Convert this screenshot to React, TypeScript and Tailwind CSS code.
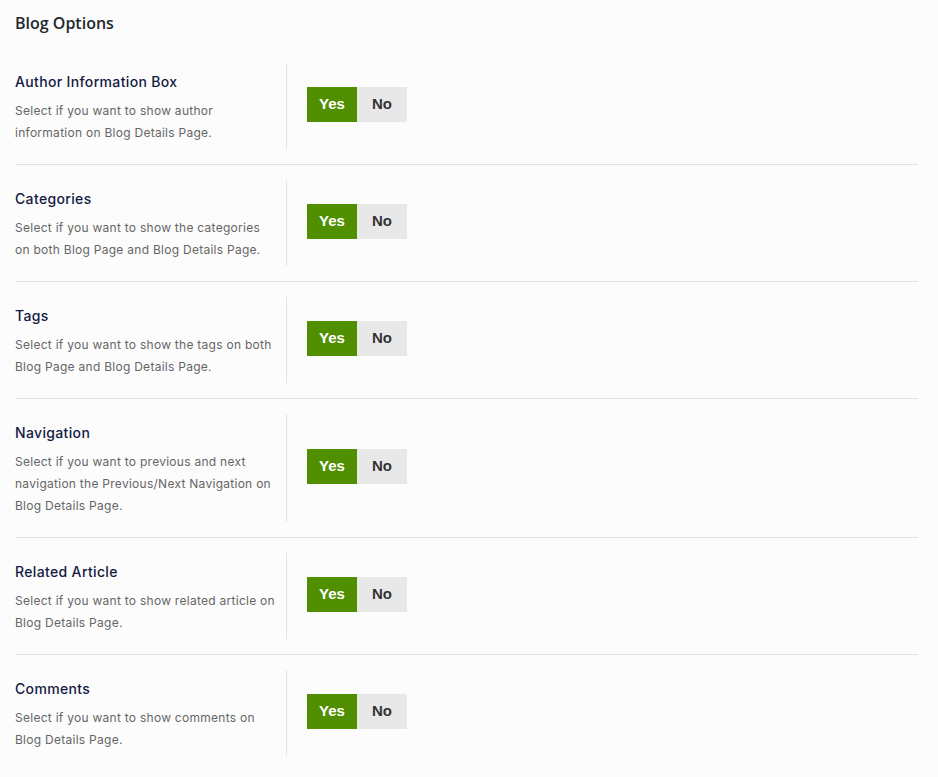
import React from "react";

const rows = [
  { title: "Author Information Box", desc: ["Select if you want to show author", "information on Blog Details Page."] },
  { title: "Categories", desc: ["Select if you want to show the categories", "on both Blog Page and Blog Details Page."] },
  { title: "Tags", desc: ["Select if you want to show the tags on both", "Blog Page and Blog Details Page."] },
  { title: "Navigation", desc: ["Select if you want to previous and next", "navigation the Previous/Next Navigation on", "Blog Details Page."] },
  { title: "Related Article", desc: ["Select if you want to show related article on", "Blog Details Page."] },
  { title: "Comments", desc: ["Select if you want to show comments on", "Blog Details Page."] },
];

export default function App() {
  return (
    <div className="min-h-[777px] w-[938px] bg-[#fcfcfc] pl-[15px] pr-[20px]" style={{ fontFamily: "Inter, 'Open Sans', sans-serif" }}>
      <div className="h-[48px] pt-[12px]">
        <h2 className="text-[16px] font-semibold leading-[22px] text-[#23282d]" style={{ fontFamily: "'Open Sans', sans-serif" }}>
          Blog Options
        </h2>
      </div>
      {rows.map((r, i) => (
        <div key={i} className={`flex py-[15px] ${i < rows.length - 1 ? "border-b border-[#e3e3e3]" : ""}`}>
          <div className="w-[272px] border-r border-[#e3e3e3] pt-[7px] pb-[5px]">
            <div className="text-[14px] font-medium leading-6 tracking-[0.35px] text-[#131a42]">{r.title}</div>
            <div className="mt-[6px] text-[12px] leading-[22px] tracking-[0.27px] text-[#666666]">
              {r.desc.map((d, j) => (
                <div key={j} className="whitespace-nowrap">{d}</div>
              ))}
            </div>
          </div>
          <div className="flex items-center pl-[20px]">
            <div className="flex -mt-[3px]" style={{ fontFamily: "'Liberation Sans', Arial, sans-serif" }}>
              <div className="flex h-[35px] w-[50px] items-center justify-center bg-[#4f8f00] text-[15px] font-bold text-white">Yes</div>
              <div className="flex h-[35px] w-[50px] items-center justify-center bg-[#e8e8e8] text-[15px] font-bold text-[#333333]">No</div>
            </div>
          </div>
        </div>
      ))}
    </div>
  );
}
